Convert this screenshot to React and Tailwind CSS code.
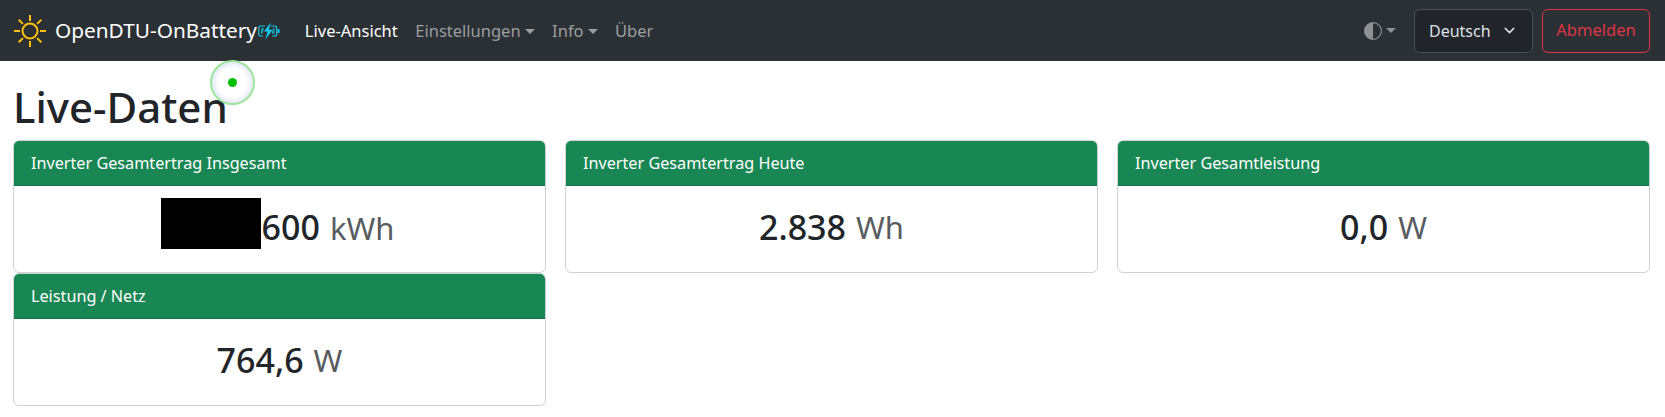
import { ChevronDown } from "lucide-react";

const font = "font-['Noto_Sans','Open_Sans',sans-serif]";

function Sun() {
  return (
    <svg width="34" height="34" viewBox="0 0 34 34" fill="none" stroke="#ffc107" strokeWidth="2" strokeLinecap="butt">
      <circle cx="17" cy="17" r="7.5" />
      <path d="M17 1v6M17 27v6M1 17h6M27 17h6M5.7 5.7l4.2 4.2M24.1 24.1l4.2 4.2M5.7 28.3l4.2-4.2M24.1 9.9l4.2-4.2" />
    </svg>
  );
}

function Battery() {
  return (
    <svg width="22" height="18" viewBox="0 0 22 18" fill="none" className="ml-px">
      <path d="M7 4H2.5A1.7 1.7 0 0 0 .8 5.7v6.6A1.7 1.7 0 0 0 2.5 14H5M12.5 4h4.5a1.7 1.7 0 0 1 1.7 1.7v6.6a1.7 1.7 0 0 1-1.7 1.7h-3" stroke="#0dcaf0" strokeWidth="1.2" />
      <path d="M3 6.3h3L4.6 11.7H3zM16.6 6.3v5.4h-3l1.4-5.4z" fill="#0dcaf0" opacity="0.7" />
      <rect x="19.6" y="7" width="2" height="4" rx="0.8" fill="#0dcaf0" />
      <path d="M12.6 0.6 L6 9.6 H9.6 L7.4 17.4 L14.6 7.8 H10.8 Z" fill="#0dcaf0" />
    </svg>
  );
}

function Caret({ className }) {
  return <span className={`inline-block ml-1 border-x-[5px] border-t-[5px] border-x-transparent border-t-current ${className}`}></span>;
}

function Card({ title, children }) {
  return (
    <div className="h-[133px] rounded-md border border-[#d0d2d4] bg-white overflow-hidden">
      <div className="h-[45px] bg-[#198754] border-b border-[#15704a] px-[17px] flex items-center text-white text-[16.2px]">{title}</div>
      <div className="h-[86px] flex items-center justify-center text-[34px] font-medium text-[#212529] pb-[4px]">{children}</div>
    </div>
  );
}

function Unit({ children }) {
  return <span className="ml-[10px] text-[31px] text-[#595c5f] font-normal">{children}</span>;
}

export default function App() {
  return (
    <div className={`${font} relative w-[1665px] h-[417px] bg-white overflow-hidden`}>
      <nav className="h-[61px] bg-[#2b3035] flex items-center pl-[13px] pr-[15px]">
        <Sun />
        <span className="ml-[8px] text-[20.8px] text-white">OpenDTU-OnBattery</span>
        <Battery />
        <div className="ml-[25px] pt-px flex items-center gap-[17.5px] text-[16.5px] text-[#9b9d9f]">
          <span className="text-white">Live-Ansicht</span>
          <span className="flex items-center">Einstellungen<Caret /></span>
          <span className="flex items-center">Info<Caret /></span>
          <span>Über</span>
        </div>
        <div className="ml-auto flex items-center text-[#8f9194]">
          <svg width="18" height="18" viewBox="0 0 16 16" fill="currentColor">
            <path d="M8 15A7 7 0 1 0 8 1zm0 1A8 8 0 1 1 8 0a8 8 0 0 1 0 16" />
            <path d="M8 1a7 7 0 0 0 0 14z" opacity="0.75" />
          </svg>
          <Caret />
          <div className="ml-[18px] w-[119px] h-[44px] rounded-md border border-[#495057] bg-[#212529] text-[#dee2e6] text-[16px] flex items-center justify-between pl-[14px] pr-[14px]">
            Deutsch
            <ChevronDown size={17} strokeWidth={2} />
          </div>
          <div className="ml-[9px] w-[108px] h-[44px] rounded-md border border-[#dc3545] text-[#dc3545] text-[16.5px] flex items-center justify-center">Abmelden</div>
        </div>
      </nav>

      <div className="pl-[13px] pr-[15px]">
        <h1 className="text-[42px] leading-[48px] mt-[22px] mb-[9px] font-medium text-[#212529]">Live-Daten</h1>
        <div className="grid grid-cols-3 gap-x-[19px]">
          <div className="flex flex-col">
            <Card title="Inverter Gesamtertrag Insgesamt">
              <span className="inline-block w-[100px] h-[51px] bg-black mr-[1px] -translate-y-[4px]"></span>
              600<span className="mr-[4px]"><Unit>kWh</Unit></span>
            </Card>
            <Card title="Leistung / Netz">
              764,6<Unit>W</Unit>
            </Card>
          </div>
          <Card title="Inverter Gesamtertrag Heute">
            2.838<Unit>Wh</Unit>
          </Card>
          <Card title="Inverter Gesamtleistung">
            0,0<Unit>W</Unit>
          </Card>
        </div>
      </div>

      {/* live indicator floating over the heading */}
      <div className="absolute left-[210px] top-[60px] w-[45px] h-[45px] rounded-full border-2 border-[#9be59b] bg-white shadow-[inset_0_0_7px_#c9cff0] flex items-center justify-center">
        <span className="w-[9px] h-[9px] rounded-full bg-[#00c000]"></span>
      </div>
    </div>
  );
}
